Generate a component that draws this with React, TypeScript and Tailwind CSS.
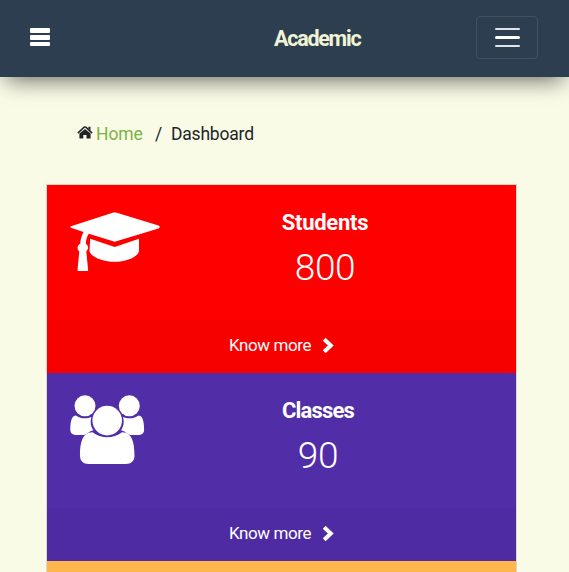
import React from "react";

function GraduationCap() {
  return (
    <svg width="90" height="60" viewBox="0 0 90 60" fill="white" className="block">
      <path d="M1 14.2Q-.6 15 1 15.7L13.5 20.1C11.5 24 10.4 28 10.3 31.6C6.8 34 6.9 37.3 9.3 39.4L7.5 58Q7.4 59 8.5 59H17Q18.2 59 18.1 58L16.3 39.2C18.7 37 18.6 33.8 15.8 31.6C16 28 17 24 18.8 21.8L44.7 29.8L88.5 16.5Q91 15 88.5 13.6L46 .6Q44.7.2 43.4.6Z" />
      <path d="M20.2 26.8L44.7 35L69 26.8V38.5C69 44.5 57 49.8 44.7 49.8S19.5 44.5 19.5 38.5Z" />
    </svg>
  );
}

function People() {
  return (
    <svg width="75" height="70" viewBox="0 0 75 70" fill="white" className="block">
      <circle cx="15" cy="10.8" r="10.5" />
      <circle cx="59.3" cy="10.8" r="10.5" />
      <circle cx="37.2" cy="25.6" r="14.8" />
      <path d="M5.8 20.5C11 24.2 17 23.8 21.5 22.1C19.8 27 21 32.5 23.4 35.2C19 36 17 39.9 13.5 39.9H5.5C2.2 39.9.3 38 .3 35C.3 30 .7 20.5 5.8 20.5Z" />
      <path d="M68.6 20.5C63.4 24.2 57.4 23.8 52.9 22.1C54.6 27 53.4 32.5 51 35.2C55.4 36 57.4 39.9 60.9 39.9H68.9C72.2 39.9 74.1 38 74.1 35C74.1 30 73.7 20.5 68.6 20.5Z" />
      <path d="M22.5 37.2C31.5 44 43 44 52 37.2C62.5 37 64.5 49 64.5 60.5C64.5 66 61.3 69 55.8 69H18.5C13.2 69 10 66 10 60.5C10 49 12 37 22.5 37.2Z" />
    </svg>
  );
}

function House() {
  return (
    <svg width="16" height="13" viewBox="0 0 16 13" fill="#212529" className="block">
      <path d="M8 2.9L2.4 7.5V12Q2.4 12.6 3 12.6H6.3V9H9.5V12.6H13Q13.6 12.6 13.6 12V7.5Z" />
      <path d="M.8 7.1L7.2 1.2Q8 .6 8.8 1.2L15.1 7.1" fill="none" stroke="#212529" strokeWidth="1.5" />
      <path d="M11.4.7H13.5V4.6L11.4 2.7Z" />
    </svg>
  );
}

interface CardProps {
  color: string;
  title: string;
  titleStyle: string;
  value: string;
  valueStyle: string;
  icon: React.ReactNode;
  iconStyle: string;
}

function StatCard({ color, title, titleStyle, value, valueStyle, icon, iconStyle }: CardProps) {
  return (
    <section className={`flex h-[188px] flex-col ${color}`}>
      <div className="flex h-[135px] pl-[23px] pt-[22px] text-white">
        <div className={`w-[112px] shrink-0 ${iconStyle}`}>{icon}</div>
        <div className="w-[286px] text-center">
          <h2 className={`h-[32px] text-[22px] font-bold leading-[32px] ${titleStyle}`}>{title}</h2>
          <p className={`mt-[7px] text-[37px] font-light leading-[44px] ${valueStyle}`}>{value}</p>
        </div>
      </div>
      <a href="#" className="flex h-[53px] items-center bg-black/[0.03] pb-[3px] pl-[182px] text-white">
        <span className="w-[93px] whitespace-nowrap text-[17px] leading-6 tracking-[-0.42px]">Know more</span>
        <svg width="13" height="17" viewBox="0 0 13 17">
          <path d="M2.2 2.2L8.8 8.5L2.2 14.8" fill="none" stroke="white" strokeWidth="4" />
        </svg>
      </a>
    </section>
  );
}

export default function App() {
  return (
    <div className="h-[572px] overflow-hidden bg-[#f9fbe7] font-['Roboto','Liberation_Sans',sans-serif] text-[#212529]">
      <header className="flex h-[77px] items-center bg-[#2d3e50] pb-[2px] shadow-[0_9px_22px_-6px_rgba(0,0,0,0.6)]">
        <button className="ml-[30px] flex w-5 flex-col gap-[2px] pb-[2px]" aria-label="Sidebar">
          <span className="h-[5px] rounded-[1px] bg-white" />
          <span className="h-[5px] rounded-[1px] bg-white" />
          <span className="h-[4px] rounded-[1px] bg-white" />
        </button>
        <h1 className="ml-[224px] w-[202px] pt-[2px] text-[21.5px] font-bold leading-8 tracking-[-1.25px] text-[#f0f4d5]">Academic</h1>
        <button className="flex h-[43px] w-[62px] flex-col items-center justify-center gap-[6px] rounded-[4px] border border-[#425161]" aria-label="Menu">
          <span className="h-[2.4px] w-[25px] rounded-full bg-[#e0e3e6]" />
          <span className="h-[2.4px] w-[25px] rounded-full bg-white" />
          <span className="h-[2.4px] w-[25px] rounded-full bg-[#e0e3e6]" />
        </button>
      </header>
      <nav className="flex h-[108px] items-start pl-[77px] pt-[45px] text-[17.5px] leading-6">
        <span className="w-[19px] pt-[4px]"><House /></span>
        <a href="#" className="w-[59px] tracking-[-0.1px] text-[#7cb342]">Home</a>
        <span className="w-4">/</span>
        <span className="whitespace-nowrap tracking-[-0.2px]">Dashboard</span>
      </nav>
      <main className="ml-[47px] w-[469px] shadow-[0_0_0_1px_rgba(0,0,0,0.13)]">
        <StatCard color="bg-[#ff0000]" title="Students" titleStyle="tracking-[-0.25px]" value="800" valueStyle="tracking-[-0.3px]" icon={<GraduationCap />} iconStyle="pt-[5px]" />
        <StatCard color="bg-[#512da8]" title="Classes" titleStyle="pr-[14px] tracking-[-0.85px]" value="90" valueStyle="pr-[14px] tracking-[-0.3px]" icon={<People />} iconStyle="pt-0" />
        <div className="h-[40px] bg-[#ffb74d]" />
      </main>
    </div>
  );
}
